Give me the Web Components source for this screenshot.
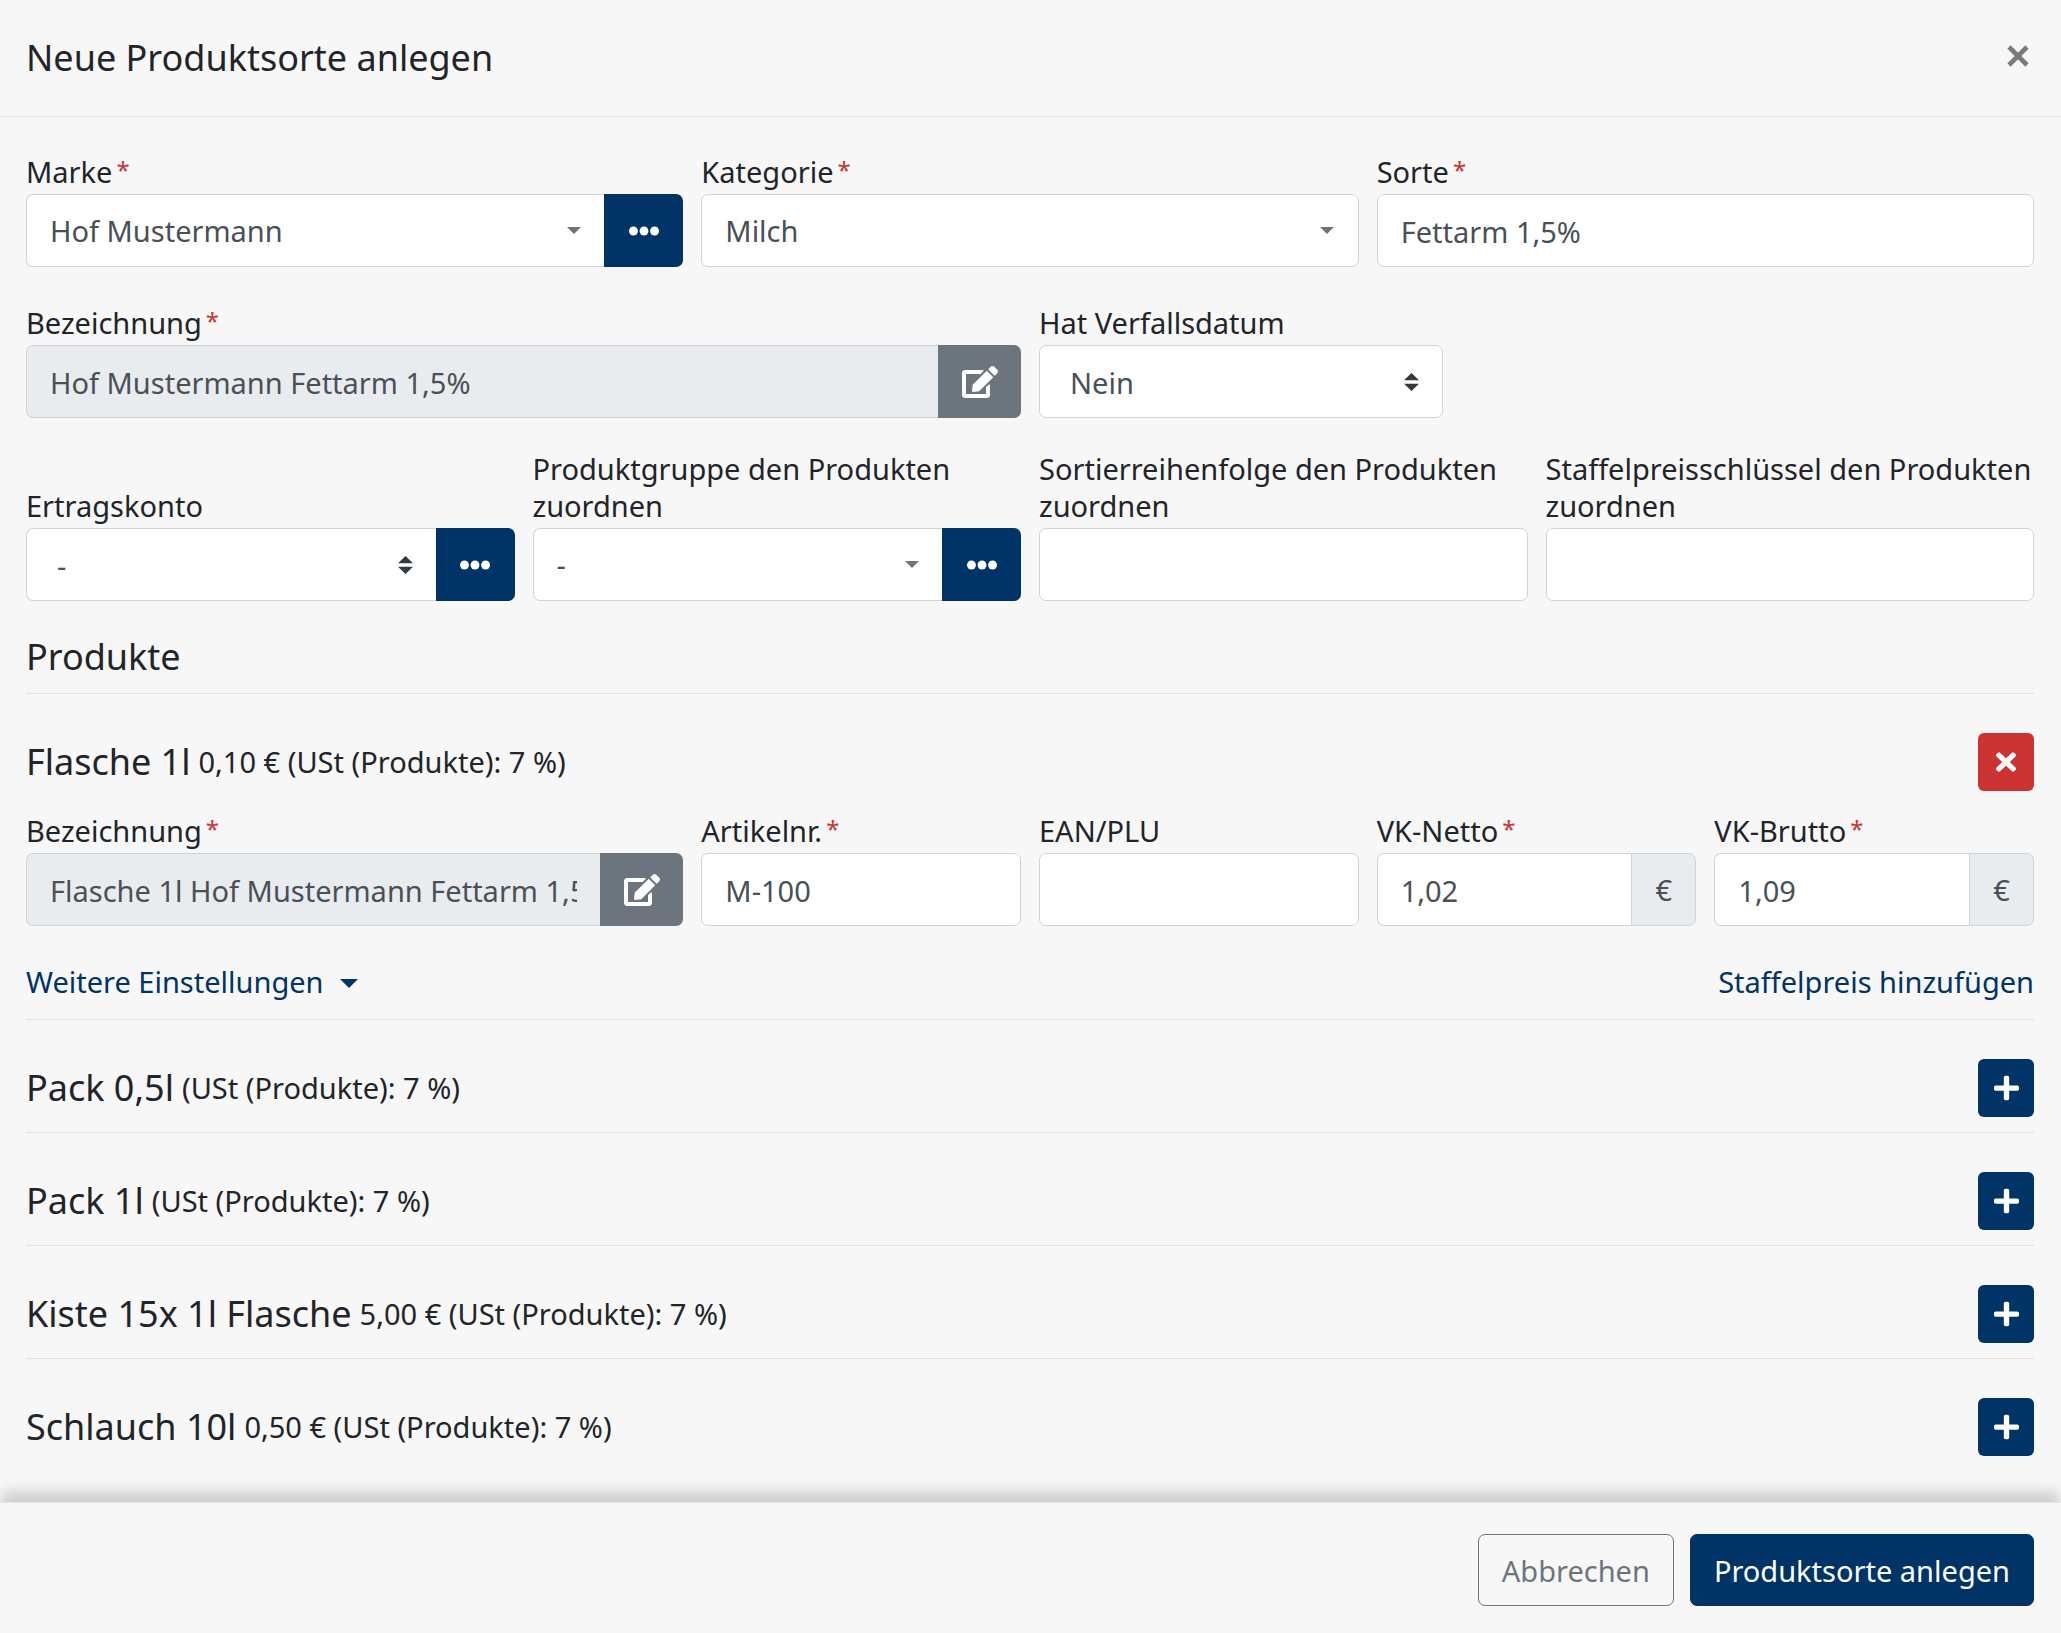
<!DOCTYPE html>
<html lang="de">
<head>
<meta charset="utf-8">
<meta name="viewport" content="width=device-width, initial-scale=1">
<title>Neue Produktsorte anlegen</title>
<style>
  :root {
    --bg: #f7f7f7;
    --text: #212529;
    --input-text: #495057;
    --border: #ced4da;
    --rule: #dee2e6;
    --primary: #003366;
    --secondary: #6c757d;
    --danger: #cc3333;
    --disabled: #e9ecef;
    --radius: 7px;
    --size-heading: 36px;
    --gutter: 26px;
    --gutter-end: 27px;
    --control: 73px;
  }
  body {
    margin: 0;
    background: var(--bg);
    color: var(--text);
    font: 29px/37px "Noto Sans", "Open Sans", sans-serif;
  }
</style>
</head>
<body>
<product-dialog></product-dialog>

<script>
const ICONS = {
  more: ['0 0 512 512', '<circle cx="76" cy="256" r="76"/><circle cx="256" cy="256" r="76"/><circle cx="436" cy="256" r="76"/>'],
  edit: ['0 0 576 512', '<path d="M402.6 83.2l90.2 90.2c3.8 3.8 3.8 10 0 13.8L274.4 405.6l-92.8 10.3c-12.4 1.4-22.9-9.1-21.5-21.5l10.3-92.8L388.8 83.2c3.8-3.8 10-3.8 13.8 0zm162-22.9l-48.8-48.8c-15.2-15.2-39.9-15.2-55.2 0l-35.4 35.4c-3.8 3.8-3.8 10 0 13.8l90.2 90.2c3.8 3.8 10 3.8 13.8 0l35.4-35.4c15.2-15.3 15.2-40 0-55.2zM384 346.2V448H64V128h229.8c3.2 0 6.2-1.3 8.5-3.5l40-40c7.6-7.6 2.2-20.5-8.5-20.5H48C21.5 64 0 85.5 0 112v352c0 26.5 21.5 48 48 48h352c26.5 0 48-21.5 48-48V306.2c0-10.7-12.9-16-20.5-8.5l-40 40c-2.2 2.3-3.5 5.3-3.5 8.5z"/>'],
  times: ['0 0 352 512', '<path d="M242.72 256l100.07-100.07c12.28-12.28 12.28-32.19 0-44.48l-22.24-22.24c-12.28-12.28-32.19-12.28-44.48 0L176 189.28 75.93 89.21c-12.28-12.28-32.19-12.28-44.48 0L9.21 111.45c-12.28 12.28-12.28 32.19 0 44.48L109.28 256 9.21 356.07c-12.28 12.28-12.28 32.19 0 44.48l22.24 22.24c12.28 12.28 32.2 12.28 44.48 0L176 322.72l100.07 100.07c12.28 12.28 32.2 12.28 44.48 0l22.24-22.24c12.28-12.28 12.28-32.19 0-44.48L242.72 256z"/>'],
  plus: ['0 0 448 512', '<path d="M416 208H272V64c0-17.67-14.33-32-32-32h-32c-17.67 0-32 14.33-32 32v144H32c-17.67 0-32 14.33-32 32v32c0 17.67 14.33 32 32 32h144v144c0 17.67 14.33 32 32 32h32c17.67 0 32-14.33 32-32V304h144c17.67 0 32-14.33 32-32v-32c0-17.67-14.33-32-32-32z"/>'],
  close: ['0 0 22 22', '<path d="M2 2l18 18M20 2l-18 18" stroke="currentColor" stroke-width="4.6" fill="none"/>'],
  caret: ['0 0 14 7', '<path d="M0 0h14L7 7z"/>'],
  sort: ['0 0 4 5', '<path d="M2 0L0 2h4zm0 5L0 3h4z"/>']
};

class UiIcon extends HTMLElement {
  connectedCallback() {
    const [box, shape] = ICONS[this.getAttribute('name')];
    this.attachShadow({ mode: 'open' }).innerHTML = `
      <style>
        :host { display: inline-flex; flex: none; }
        svg { display: block; width: 100%; height: 100%; fill: currentColor; }
      </style>
      <svg viewBox="${box}" preserveAspectRatio="none" aria-hidden="true">${shape}</svg>`;
  }
}

/* Label, control and optional add-on (button or unit) */
class FormField extends HTMLElement {
  connectedCallback() {
    const get = name => this.getAttribute(name) || '';
    const kind = get('kind') || 'text';
    const addon = get('addon');
    const star = this.hasAttribute('required') ? '<span class="star">*</span>' : '';
    let control;
    if (kind === 'text') {
      control = `<input id="control" type="text" value="${get('value')}" ${this.hasAttribute('readonly') ? 'readonly' : ''}>`;
    } else {
      control = `<select id="control" class="${kind}"><option>${get('value')}</option></select>
        <ui-icon class="${kind}" name="${kind === 'native' ? 'sort' : 'caret'}"></ui-icon>`;
    }
    let extra = '';
    if (addon === 'more') extra = '<button type="button" class="more" aria-label="Mehr"><ui-icon name="more"></ui-icon></button>';
    else if (addon === 'edit') extra = '<button type="button" class="edit" aria-label="Bearbeiten"><ui-icon name="edit"></ui-icon></button>';
    else if (addon) extra = `<span class="unit">${addon}</span>`;
    this.attachShadow({ mode: 'open' }).innerHTML = `
      <style>
        * { box-sizing: border-box; }
        :host { display: flex; flex-direction: column; justify-content: flex-end; min-width: 0; }
        .label { display: flex; align-items: flex-end; min-height: 46px; padding-bottom: 4px; }
        .star { margin-left: 4px; color: var(--danger); font-size: 24px; line-height: 0; vertical-align: 4px; }
        .group { display: flex; height: var(--control); }
        .box { display: grid; flex: 1; min-width: 0; }
        .box > * { grid-area: 1 / 1; }
        input, select {
          width: 100%; min-width: 0; height: 100%; margin: 0; padding: 1px 23px 0;
          border: 1px solid var(--border); border-radius: var(--radius); outline: none;
          background: #fff; color: var(--input-text); font: inherit; appearance: none;
        }
        select { padding-top: 0; }
        select.native { padding: 1px 30px 0; }
        input[readonly] { background: var(--disabled); }
        ui-icon { pointer-events: none; }
        .box ui-icon { align-self: center; justify-self: end; }
        ui-icon.search { width: 14px; height: 7px; margin-right: 25px; color: var(--secondary); }
        ui-icon.native { width: 15px; height: 18px; margin-right: 24px; color: #343a40; }
        .joined input, .joined select { border-right: 0; border-radius: var(--radius) 0 0 var(--radius); }
        .joined ui-icon.search, .joined ui-icon.native { margin-right: 23px; }
        button {
          display: flex; align-items: center; justify-content: center; margin: 0; padding: 0; border: 0;
          border-radius: 0 var(--radius) var(--radius) 0; color: #fff; cursor: pointer;
        }
        .more { width: 79px; background: var(--primary); }
        .more ui-icon { width: 30px; height: 30px; }
        .edit { width: 83px; background: var(--secondary); }
        .edit ui-icon { width: 36px; height: 32px; }
        .unit {
          display: flex; align-items: center; justify-content: center; width: 65px;
          border: 1px solid var(--border); border-radius: 0 var(--radius) var(--radius) 0;
          background: var(--disabled); color: var(--input-text);
        }
      </style>
      <div class="label"><label for="control">${get('label')}${star}</label></div>
      <div class="group ${extra ? 'joined' : ''}"><div class="box">${control}</div>${extra}</div>`;
  }
}

class FieldGrid extends HTMLElement {
  connectedCallback() {
    this.attachShadow({ mode: 'open' }).innerHTML = `
      <style>
        :host { display: grid; grid-template-columns: repeat(24, minmax(0, 1fr)); column-gap: 18px; }
        ::slotted([span="4"]) { grid-column: span 4; }
        ::slotted([span="5"]) { grid-column: span 5; }
        ::slotted([span="6"]) { grid-column: span 6; }
        ::slotted([span="8"]) { grid-column: span 8; }
        ::slotted([span="12"]) { grid-column: span 12; }
      </style>
      <slot></slot>`;
  }
}

class ProductItem extends HTMLElement {
  connectedCallback() {
    const open = this.hasAttribute('open');
    this.attachShadow({ mode: 'open' }).innerHTML = `
      <style>
        :host { display: block; padding: 39px 0 15px; border-top: 1px solid var(--rule); }
        :host([open]) { padding-bottom: 18px; }
        header { display: flex; align-items: center; gap: 8px; }
        h3 { margin: 0; font-size: var(--size-heading); font-weight: 400; line-height: 44px; }
        .info { padding-bottom: 2px; }
        button {
          display: flex; align-items: center; justify-content: center; width: 56px; height: 58px;
          margin: 0 0 0 auto; padding: 0; border: 0; border-radius: 6px;
          background: var(--primary); color: #fff; cursor: pointer;
        }
        button.remove { background: var(--danger); }
        ui-icon { width: 25px; height: 28px; }
        .remove ui-icon { width: 20px; height: 28px; }
      </style>
      <header>
        <h3>${this.getAttribute('name')}</h3>
        <span class="info">${this.getAttribute('info')}</span>
        <button type="button" class="${open ? 'remove' : 'add'}" aria-label="${open ? 'Entfernen' : 'Hinzufügen'}">
          <ui-icon name="${open ? 'times' : 'plus'}"></ui-icon>
        </button>
      </header>
      <slot></slot>`;
  }
}

class ProductLinks extends HTMLElement {
  connectedCallback() {
    this.attachShadow({ mode: 'open' }).innerHTML = `
      <style>
        :host { display: flex; justify-content: space-between; padding-top: 37px; padding-bottom: 1px; }
        a { display: flex; align-items: center; gap: 16px; color: var(--primary); text-decoration: none; }
        ui-icon { width: 18px; height: 9px; padding-top: 3px; }
      </style>
      <a href="#einstellungen">Weitere Einstellungen <ui-icon name="caret"></ui-icon></a>
      <a href="#staffelpreis">Staffelpreis hinzufügen</a>`;
  }
}

class DialogButton extends HTMLElement {
  connectedCallback() {
    this.attachShadow({ mode: 'open' }).innerHTML = `
      <style>
        :host { display: block; }
        button {
          height: 72px; margin: 0; padding: 0 23px; border: 1px solid var(--secondary); border-radius: var(--radius);
          background: transparent; color: var(--secondary); font: inherit; cursor: pointer;
        }
        :host([primary]) button { border-color: var(--primary); background: var(--primary); color: #fff; }
      </style>
      <button type="button"><slot></slot></button>`;
  }
}

class ProductDialog extends HTMLElement {
  connectedCallback() {
    this.attachShadow({ mode: 'open' }).innerHTML = `
      <style>
        :host { display: flex; flex-direction: column; height: 100vh; }
        .top {
          display: flex; align-items: center; justify-content: space-between; flex: none;
          height: 116px; padding: 0 32px 0 var(--gutter); border-bottom: 1px solid var(--rule);
        }
        h1, h2 { margin: 0; font-size: var(--size-heading); font-weight: 400; line-height: 44px; }
        .top button { display: flex; margin: 0 0 5px; padding: 0; border: 0; background: none; color: #7b7b7b; cursor: pointer; }
        .top ui-icon { width: 22px; height: 22px; }
        main { flex: 1; min-height: 0; overflow-y: auto; padding: 31px var(--gutter-end) 24px var(--gutter); }
        .fields { display: flex; flex-direction: column; gap: 32px; }
        h2 { padding: 34px 0 14px; }
        product-item field-grid { padding-top: 16px; }
        footer {
          display: flex; justify-content: flex-end; gap: 16px; flex: none; z-index: 1;
          padding: 31px var(--gutter-end) 27px var(--gutter); border-top: 1px solid var(--rule); background: var(--bg);
          box-shadow: 0 -13px 12px -2px rgba(0, 0, 0, .16);
        }
      </style>
      <header class="top">
        <h1>Neue Produktsorte anlegen</h1>
        <button type="button" aria-label="Schließen"><ui-icon name="close"></ui-icon></button>
      </header>
      <main>
        <div class="fields">
          <field-grid>
            <form-field span="8" label="Marke" required kind="search" value="Hof Mustermann" addon="more"></form-field>
            <form-field span="8" label="Kategorie" required kind="search" value="Milch"></form-field>
            <form-field span="8" label="Sorte" required value="Fettarm 1,5%"></form-field>
          </field-grid>
          <field-grid>
            <form-field span="12" label="Bezeichnung" required readonly value="Hof Mustermann Fettarm 1,5%" addon="edit"></form-field>
            <form-field span="5" label="Hat Verfallsdatum" kind="native" value="Nein"></form-field>
          </field-grid>
          <field-grid>
            <form-field span="6" label="Ertragskonto" kind="native" value="-" addon="more"></form-field>
            <form-field span="6" label="Produktgruppe den Produkten zuordnen" kind="search" value="-" addon="more"></form-field>
            <form-field span="6" label="Sortierreihenfolge den Produkten zuordnen"></form-field>
            <form-field span="6" label="Staffelpreisschlüssel den Produkten zuordnen"></form-field>
          </field-grid>
        </div>
        <h2>Produkte</h2>
        <product-item open name="Flasche 1l" info="0,10 € (USt (Produkte): 7 %)">
          <field-grid>
            <form-field span="8" label="Bezeichnung" required readonly value="Flasche 1l Hof Mustermann Fettarm 1,5%" addon="edit"></form-field>
            <form-field span="4" label="Artikelnr." required value="M-100"></form-field>
            <form-field span="4" label="EAN/PLU"></form-field>
            <form-field span="4" label="VK-Netto" required value="1,02" addon="€"></form-field>
            <form-field span="4" label="VK-Brutto" required value="1,09" addon="€"></form-field>
          </field-grid>
          <product-links></product-links>
        </product-item>
        <product-item name="Pack 0,5l" info="(USt (Produkte): 7 %)"></product-item>
        <product-item name="Pack 1l" info="(USt (Produkte): 7 %)"></product-item>
        <product-item name="Kiste 15x 1l Flasche" info="5,00 € (USt (Produkte): 7 %)"></product-item>
        <product-item name="Schlauch 10l" info="0,50 € (USt (Produkte): 7 %)"></product-item>
      </main>
      <footer>
        <dialog-button>Abbrechen</dialog-button>
        <dialog-button primary>Produktsorte anlegen</dialog-button>
      </footer>`;
  }
}

customElements.define('ui-icon', UiIcon);
customElements.define('form-field', FormField);
customElements.define('field-grid', FieldGrid);
customElements.define('product-item', ProductItem);
customElements.define('product-links', ProductLinks);
customElements.define('dialog-button', DialogButton);
customElements.define('product-dialog', ProductDialog);
</script>
</body>
</html>
